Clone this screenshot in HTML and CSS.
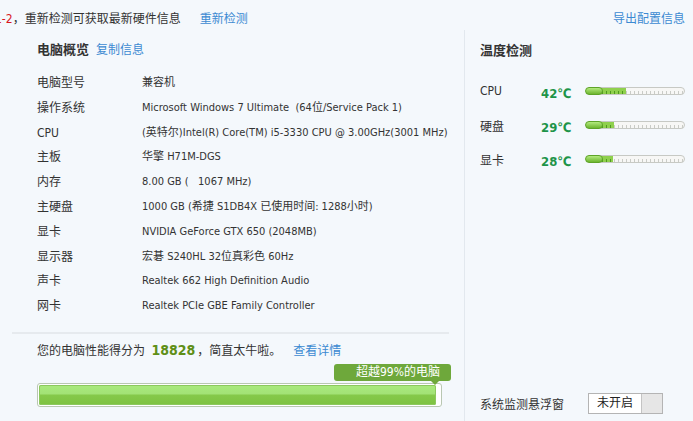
FILE: index.html
```html
<!DOCTYPE html>
<html lang="zh-CN">
<head>
  <meta charset="UTF-8">
  <title>硬件检测</title>
  <link rel="stylesheet" href="styles.css">
</head>
<body>
  <div class="topbar">
    <span class="notice"><span class="ver">1-2</span>，重新检测可获取最新硬件信息</span>
    <a class="link recheck" href="#">重新检测</a>
    <a class="link export" href="#">导出配置信息</a>
  </div>

  <div class="main">
    <div class="overview">
      <div class="title">电脑概览<a class="link" href="#">复制信息</a></div>
      <ul class="specs">
        <li><span class="key">电脑型号</span><span>兼容机</span></li>
        <li><span class="key">操作系统</span><span>Microsoft Windows 7 Ultimate&nbsp; (64位/Service Pack 1)</span></li>
        <li><span class="key">CPU</span><span>(英特尔)Intel(R) Core(TM) i5-3330 CPU @ 3.00GHz(3001 MHz)</span></li>
        <li><span class="key">主板</span><span>华擎 H71M-DGS</span></li>
        <li><span class="key">内存</span><span>8.00 GB (&nbsp;&nbsp; 1067 MHz)</span></li>
        <li><span class="key">主硬盘</span><span>1000 GB (希捷 S1DB4X 已使用时间: 1288小时)</span></li>
        <li><span class="key">显卡</span><span>NVIDIA GeForce GTX 650 (2048MB)</span></li>
        <li><span class="key">显示器</span><span>宏碁 S240HL 32位真彩色 60Hz</span></li>
        <li><span class="key">声卡</span><span>Realtek 662 High Definition Audio</span></li>
        <li><span class="key">网卡</span><span>Realtek PCIe GBE Family Controller</span></li>
      </ul>

      <div class="score">
        <p>您的电脑性能得分为 <b class="points">18828</b>，简直太牛啦。<a class="link" href="#">查看详情</a></p>
        <div class="rank-row"><span class="rank">超越99%的电脑</span></div>
        <div class="meter"><div class="meter-fill" style="width: 99%"></div></div>
      </div>
    </div>

    <div class="temps">
      <div class="title">温度检测</div>
      <div class="temp-row">
        <span class="temp-key">CPU</span>
        <span class="temp-val">42℃</span>
        <div class="thermo"><div class="thermo-fill" style="width: 40%"></div></div>
      </div>
      <div class="temp-row">
        <span class="temp-key">硬盘</span>
        <span class="temp-val">29℃</span>
        <div class="thermo"><div class="thermo-fill" style="width: 28%"></div></div>
      </div>
      <div class="temp-row">
        <span class="temp-key">显卡</span>
        <span class="temp-val">28℃</span>
        <div class="thermo"><div class="thermo-fill" style="width: 27%"></div></div>
      </div>

      <div class="float-row">
        <span>系统监测悬浮窗</span>
        <div class="switch"><span class="switch-on">未开启</span><span class="switch-knob"></span></div>
      </div>
    </div>
  </div>
</body>
</html>
```

FILE: styles.css
```css
body {
  margin: 0;
  width: 693px;
  height: 421px;
  overflow: hidden;
  background: #f4f8fc;
  color: #333;
  font-family: "DejaVu Sans Condensed", "Noto Sans CJK SC", sans-serif;
  font-size: 11px;
}

.link {
  color: #3c8ad2;
  text-decoration: none;
  font-size: 12px;
}

.topbar {
  display: flex;
  align-items: center;
  height: 30px;
  padding-top: 4px;
  box-sizing: border-box;
  font-size: 12px;
}

.notice {
  margin-left: -5px;
}

.ver {
  color: #d8151c;
}

.recheck {
  margin-left: 19px;
}

.export {
  margin-left: auto;
  margin-right: 8px;
}

.main {
  display: flex;
  height: 391px;
}

.title {
  font-size: 13px;
  font-weight: bold;
  line-height: 20px;
  margin-top: 10px;
}

.title .link {
  font-weight: normal;
  margin-left: 7px;
}

.overview {
  width: 465px;
  box-sizing: border-box;
  padding-left: 12px;
  border-right: 1px solid #e2e8ee;
}

.overview .title {
  padding-left: 25px;
}

.specs {
  list-style: none;
  margin: 11px 0 0;
  padding: 0 0 0 25px;
}

.specs li {
  display: flex;
  height: 24.8px;
  line-height: 24.8px;
  white-space: nowrap;
}

.key {
  width: 105px;
  flex: none;
  font-size: 12px;
}

.score {
  margin-top: 13px;
  margin-right: 15px;
  border-top: 2px solid #e6eaee;
  padding: 6px 0 0 25px;
}

.score p {
  margin: 0;
  line-height: 20px;
  font-size: 12px;
}

.points {
  color: #5f8f17;
  font-size: 14px;
  margin: 0 2px 0 3px;
}

.score .link {
  margin-left: 12px;
}

.rank-row {
  display: flex;
  justify-content: flex-end;
  margin-top: 3px;
  margin-right: -2px;
}

.rank {
  position: relative;
  background: #6ea83b;
  color: #fff;
  font-size: 12px;
  line-height: 17px;
  padding: 0 11px 0 22px;
  border-radius: 3px;
}

.rank::after {
  content: "";
  position: absolute;
  right: 12px;
  bottom: -4px;
  border-left: 4px solid transparent;
  border-right: 4px solid transparent;
  border-top: 4px solid #6ea83b;
}

.meter {
  margin-top: 2px;
  width: 405px;
  height: 24px;
  box-sizing: border-box;
  border: 1px solid #b9c7b2;
  border-radius: 3px;
  background: #fff;
  padding: 1px;
}

.meter-fill {
  height: 100%;
  border-radius: 2px;
  background: linear-gradient(to bottom, #a9ea7c 0%, #a2e276 45%, #85c94a 50%, #7dc241 100%);
  box-shadow: inset 0 0 0 1px #8cc85e;
}

.temps {
  flex: 1;
  display: flex;
  flex-direction: column;
  padding-left: 15px;
}

.temps .title {
  margin-top: 11px;
  margin-bottom: 13px;
}

.temp-row {
  display: flex;
  align-items: center;
  height: 34px;
}

.temp-key {
  width: 61px;
  font-size: 12px;
}

.temp-val {
  width: 45px;
  color: #1d9448;
  font-size: 13px;
  font-weight: bold;
  margin-top: 4px;
}

.thermo {
  position: relative;
  width: 99px;
  height: 8px;
  box-sizing: border-box;
  border: 1px solid #c7c9c4;
  border-radius: 4px;
  background:
    repeating-linear-gradient(to right, transparent 0 3px, #c9cbc6 3px 4px) 0 3px / 100% 4px no-repeat,
    #f7f7f5;
}

.thermo-fill {
  height: 100%;
  background:
    repeating-linear-gradient(to right, transparent 0 3px, #4f9a1f 3px 4px) 0 3px / 100% 4px no-repeat,
    #8fd04d;
  border-radius: 4px 0 0 4px;
}

.thermo::before {
  content: "";
  position: absolute;
  left: -2px;
  top: -1px;
  width: 16px;
  height: 6px;
  border-radius: 4px;
  background: linear-gradient(to bottom, #b3ea7e, #6db52f);
  border: 1px solid #5ea428;
}

.float-row {
  margin-top: auto;
  margin-bottom: 7px;
  display: flex;
  align-items: center;
  font-size: 12px;
}

.switch {
  display: flex;
  margin-left: 24px;
  width: 75px;
  height: 21px;
  box-sizing: border-box;
  border: 1px solid #b4b4b4;
  background: #e6e6e6;
}

.switch-on {
  width: 52px;
  background: #fff;
  border-right: 1px solid #c4c4c4;
  text-align: center;
  line-height: 19px;
  color: #222;
}
```
